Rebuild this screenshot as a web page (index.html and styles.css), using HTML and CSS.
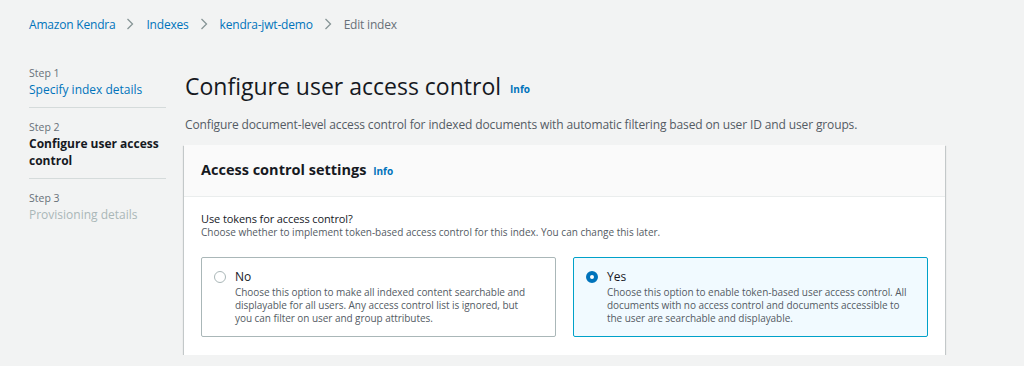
FILE: index.html
```html
<!DOCTYPE html>
<html lang="en">

<head>
    <meta charset="UTF-8">
    <meta name="viewport" content="width=device-width, initial-scale=1.0">
    <title>Edit index</title>
    <link rel="stylesheet" href="styles.css">
</head>

<body>
    <nav class="crumbs">
        <a href="#">Amazon Kendra</a>
        <svg class="sep" width="8" height="12" viewBox="0 0 8 12"><polyline points="1.5,1 6.5,6 1.5,11" fill="none" stroke="#879596" stroke-width="1.3"/></svg>
        <a href="#">Indexes</a>
        <svg class="sep" width="8" height="12" viewBox="0 0 8 12"><polyline points="1.5,1 6.5,6 1.5,11" fill="none" stroke="#879596" stroke-width="1.3"/></svg>
        <a href="#">kendra-jwt-demo</a>
        <svg class="sep" width="8" height="12" viewBox="0 0 8 12"><polyline points="1.5,1 6.5,6 1.5,11" fill="none" stroke="#879596" stroke-width="1.3"/></svg>
        <span class="here">Edit index</span>
    </nav>

    <div class="layout">
        <ul class="steps">
            <li class="step">
                <div class="step-num">Step 1</div>
                <a class="step-name link" href="#">Specify index details</a>
            </li>
            <li class="step">
                <div class="step-num">Step 2</div>
                <div class="step-name current">Configure user access control</div>
            </li>
            <li class="step">
                <div class="step-num">Step 3</div>
                <div class="step-name disabled">Provisioning details</div>
            </li>
        </ul>

        <main class="content">
            <h1 class="page-title">Configure user access control <a class="info" href="#">Info</a></h1>
            <p class="page-desc">Configure document-level access control for indexed documents with automatic filtering based on user ID and user groups.</p>

            <section class="panel">
                <div class="panel-head">
                    <h2>Access control settings <a class="info" href="#">Info</a></h2>
                </div>
                <div class="panel-body">
                    <div class="field-label">Use tokens for access control?</div>
                    <div class="field-desc">Choose whether to implement token-based access control for this index. You can change this later.</div>

                    <div class="tiles">
                        <label class="tile">
                            <span class="radio"></span>
                            <span class="tile-text">
                                <span class="tile-title">No</span>
                                <span class="tile-desc">Choose this option to make all indexed content searchable and displayable for all users. Any access control list is ignored, but you&nbsp;can filter on user and group attributes.</span>
                            </span>
                        </label>
                        <label class="tile selected">
                            <span class="radio checked"></span>
                            <span class="tile-text">
                                <span class="tile-title">Yes</span>
                                <span class="tile-desc">Choose this option to enable token-based user access control. All documents with no access control and documents accessible to the&nbsp;user are searchable and displayable.</span>
                            </span>
                        </label>
                    </div>
                </div>
            </section>
        </main>
    </div>
</body>

</html>
```

FILE: styles.css
```css
body {
    margin: 0;
    background: #f2f3f3;
    font-family: "Open Sans", "Noto Sans", sans-serif;
    color: #16191f;
}

a {
    text-decoration: none;
    color: #0073bb;
}

.crumbs {
    display: flex;
    align-items: center;
    height: 48px;
    padding-left: 29px;
    font-size: 12px;
    letter-spacing: -0.2px;
}

.crumbs .sep {
    margin: 0 12px 0 11px;
}

.crumbs .here {
    color: #687078;
}

.layout {
    display: flex;
    padding-left: 29px;
}

.steps {
    list-style: none;
    margin: 6px 0 0;
    padding: 0;
    width: 137px;
}

.step {
    padding: 11px 0 9px;
    border-bottom: 1px solid #d5dbdb;
}

.step:last-child {
    border-bottom: none;
}

.step-num {
    font-size: 10.5px;
    color: #687078;
    line-height: 16px;
}

.step-name {
    display: block;
    font-size: 12px;
    line-height: 17px;
}

.step-name.current {
    font-weight: bold;
}

.step-name.disabled {
    color: #aab7b8;
}

.content {
    margin-left: 19px;
    width: 760px;
}

.page-title {
    font-size: 23px;
    font-weight: normal;
    margin: 22px 0 0;
    line-height: 32px;
}

.info {
    font-size: 10px;
    font-weight: bold;
    margin-left: 3px;
    letter-spacing: 0;
    vertical-align: middle;
}

.page-desc {
    font-size: 12px;
    letter-spacing: -0.13px;
    color: #545b64;
    margin: 11px 0 0;
    line-height: 18px;
}

.panel {
    margin-top: 11px;
    margin-left: -1px;
    background: #fff;
    box-shadow: 0 1px 1px 0 rgba(0, 28, 36, 0.3), 1px 1px 1px 0 rgba(0, 28, 36, 0.15), -1px 1px 1px 0 rgba(0, 28, 36, 0.15);
}

.panel-head {
    background: #fafafa;
    border-bottom: 1px solid #eaeded;
    padding: 13px 17px;
}

.panel-head h2 {
    margin: 0;
    font-size: 14.5px;
    line-height: 24px;
}

.panel-body {
    padding: 15px 17px 18px;
}

.field-label {
    font-size: 11px;
    letter-spacing: -0.1px;
    line-height: 14px;
}

.field-desc {
    font-size: 10px;
    color: #545b64;
    line-height: 12px;
}

.tiles {
    display: flex;
    gap: 17px;
    margin-top: 19px;
}

.tile {
    flex: 1;
    display: flex;
    gap: 9px;
    padding: 10px 9px 11px 12px;
    border: 1px solid #aab7b8;
    border-radius: 2px;
    background: #fff;
}

.tile.selected {
    background: #f1faff;
    border-color: #00a1c9;
}

.radio {
    flex: none;
    width: 12px;
    height: 12px;
    margin-top: 3px;
    border: 1px solid #aab7b8;
    border-radius: 50%;
    box-sizing: border-box;
    background: #fff;
}

.radio.checked {
    border: 4px solid #0073bb;
}

.tile-text {
    display: flex;
    flex-direction: column;
}

.tile-title {
    font-size: 12px;
    line-height: 18px;
}

.tile-desc {
    font-size: 10px;
    letter-spacing: -0.05px;
    line-height: 13px;
    color: #545b64;
}
```
